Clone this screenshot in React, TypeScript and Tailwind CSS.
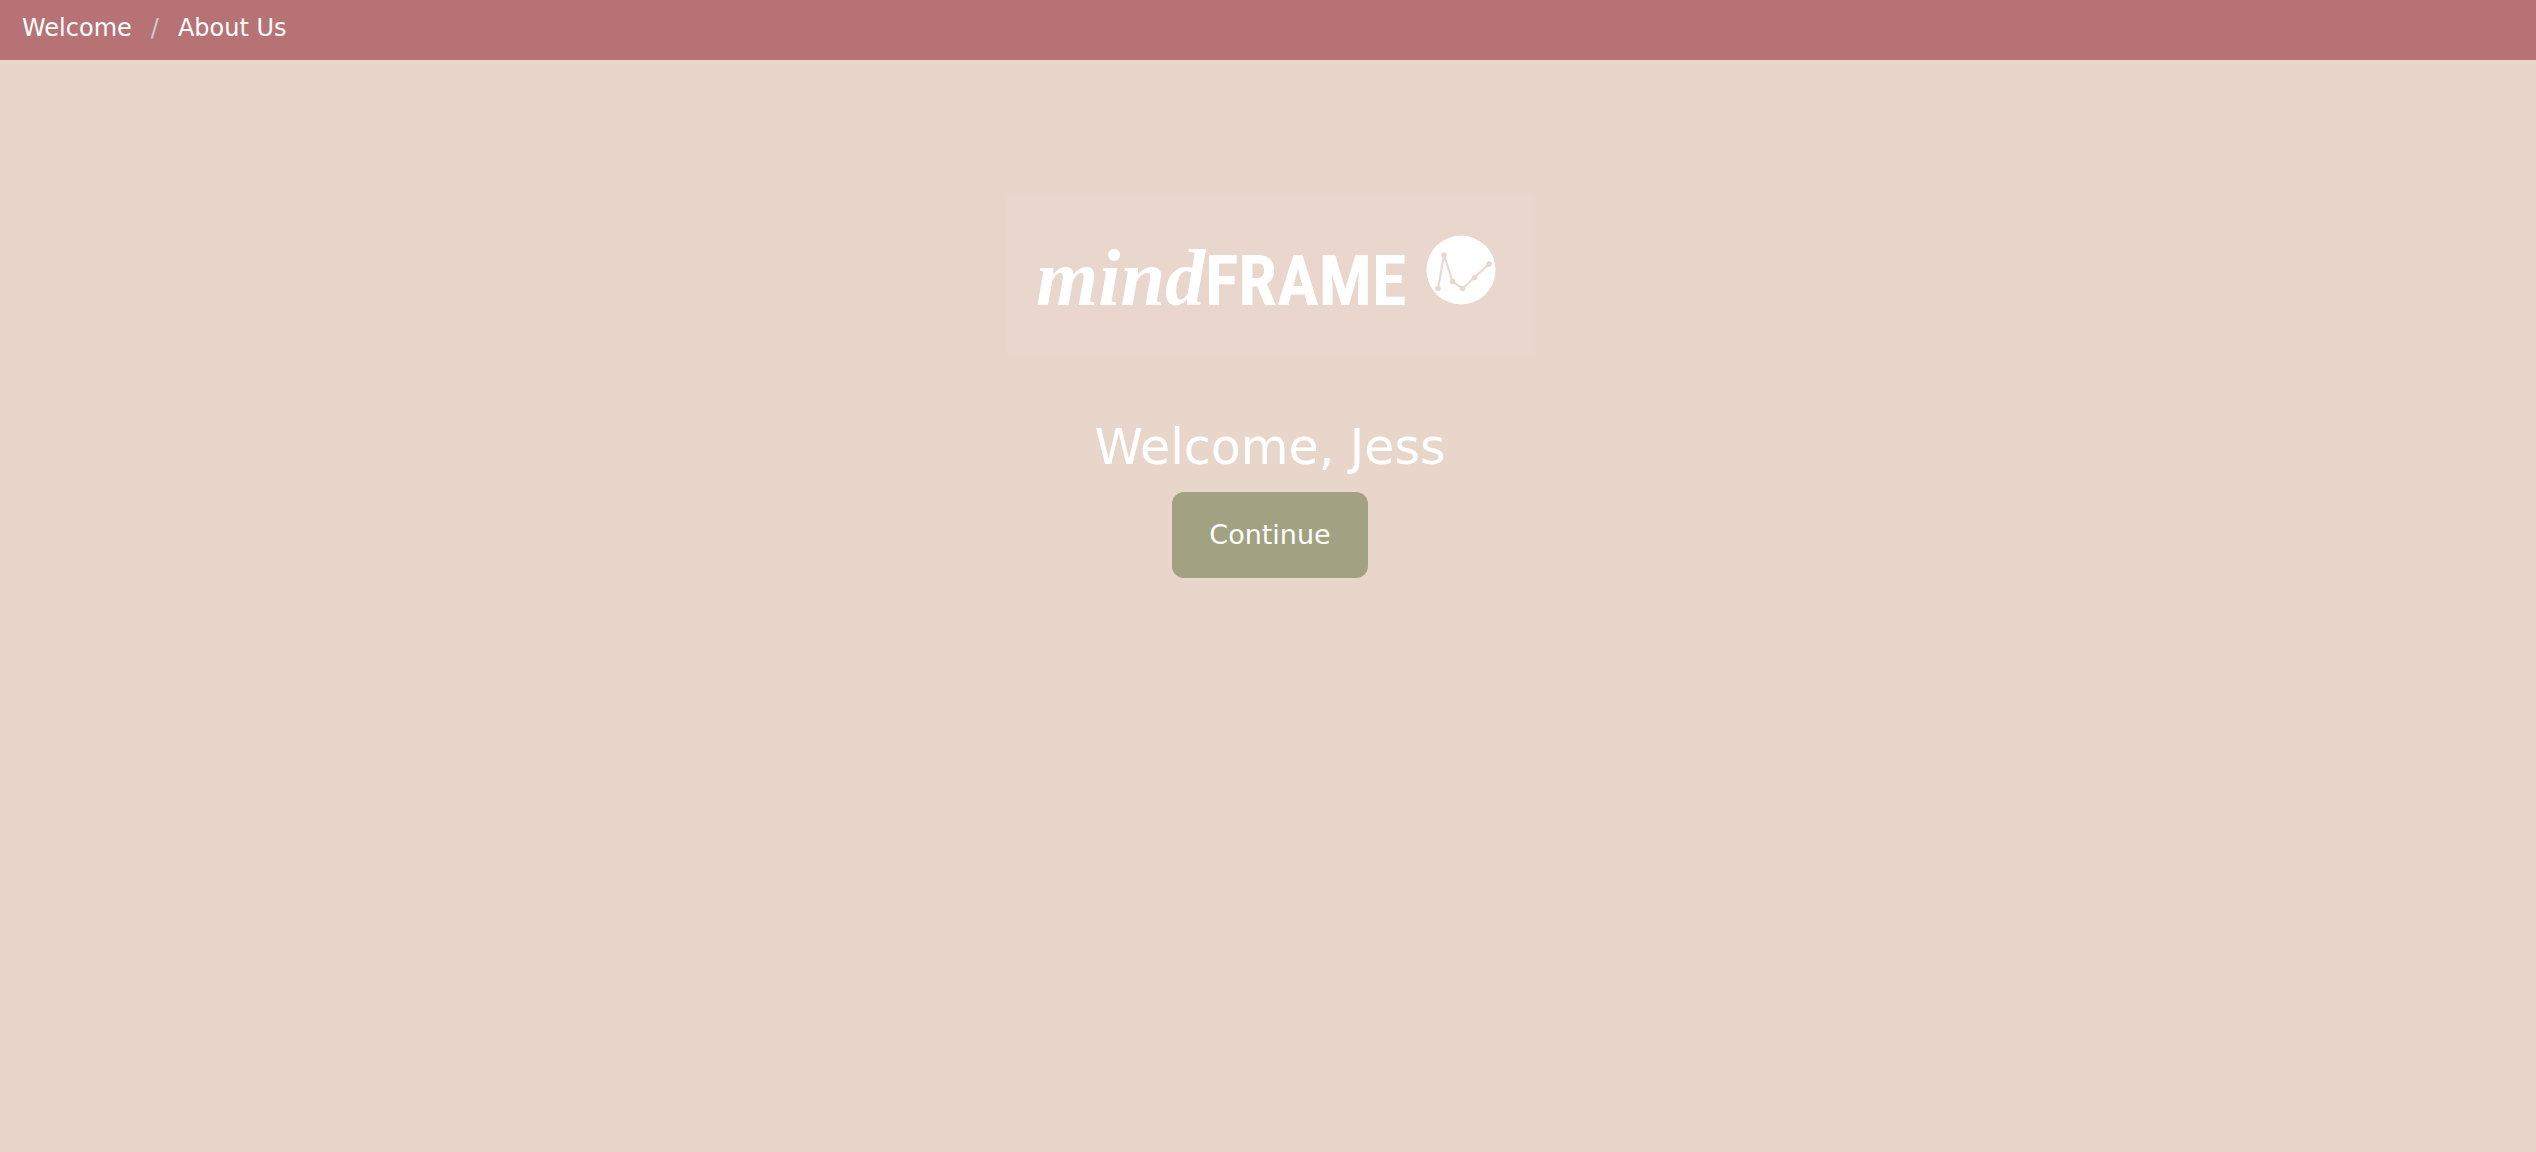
import React from 'react';

const NavBar: React.FC = () => {
    return (
        <header className="h-[60px] bg-[#b77275] px-[22px] pt-3">
            <nav aria-label="Main">
                <ul className="flex gap-[19px] text-2xl leading-8">
                    <li><a href="#welcome">Welcome</a></li>
                    <li aria-hidden="true" className="text-[#cccccc]">/</li>
                    <li><a href="#about">About Us</a></li>
                </ul>
            </nav>
        </header>
    );
};

// Line chart cut out of the white disc
const ChartMark: React.FC = () => {
    return (
        <svg className="h-[70px] w-[70px]" viewBox="0 0 70 70" aria-hidden="true">
            <circle cx="35" cy="35" r="34.5" fill="#ffffff" />
            <g fill="none" stroke="#e9d7ce" strokeWidth="2" strokeLinejoin="round">
                <path d="M12 53.5L18 20L26.5 46.5L36.5 53.5L48.5 42.5L63 29" />
            </g>
            <g fill="#e9d7ce">
                <circle cx="12" cy="53.5" r="2.8" />
                <circle cx="18" cy="20" r="2.8" />
                <circle cx="26.5" cy="46.5" r="2.8" />
                <circle cx="36.5" cy="53.5" r="2.8" />
                <circle cx="48.5" cy="42.5" r="2.8" />
                <circle cx="63" cy="29" r="2.8" />
            </g>
        </svg>
    );
};

const Logo: React.FC = () => {
    return (
        <div className="flex w-[528px] max-w-full items-baseline bg-[#e9d7ce] px-[30px] pt-10 pb-10">
            <span className="font-['Liberation_Serif',serif] text-[80px] leading-[70px] font-bold italic">mind</span>
            <span className="font-['Liberation_Sans_Narrow','Roboto_Condensed','DejaVu_Sans_Condensed',sans-serif] text-[70px] leading-[70px] font-bold">FRAME</span>
            <span className="ml-auto pr-2"><ChartMark /></span>
        </div>
    );
};

const App: React.FC = () => {
    return (
        <div className="flex min-h-screen flex-col bg-[#e8d6ca] font-[Verdana,'DejaVu_Sans',sans-serif] text-white">
            <NavBar />

            <main className="flex flex-col items-center pt-[135px] pl-1">
                <Logo />
                <h1 className="mt-[62px] text-[49px] leading-[60px]">Welcome, Jess</h1>
                <button type="button" className="mt-3.5 rounded-xl bg-[#a2a182] px-[37px] py-[25px] text-[27px] leading-9">
                    Continue
                </button>
            </main>
        </div>
    );
};

export default App;
